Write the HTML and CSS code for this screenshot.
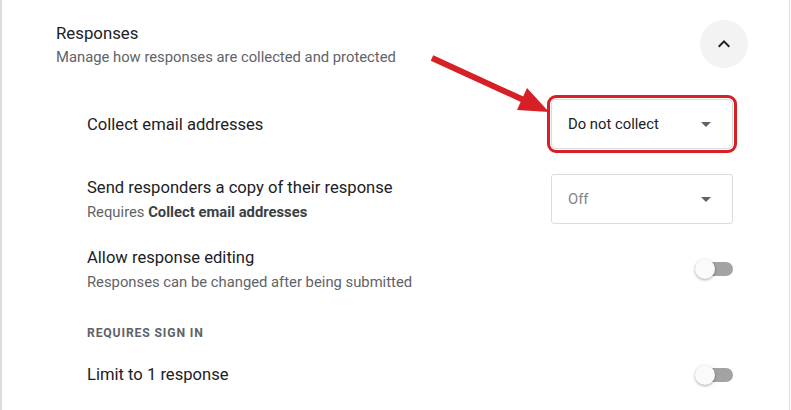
FILE: index.html
```html
<!DOCTYPE html>
<html lang="en">
<head>
    <meta charset="UTF-8">
    <meta name="viewport" content="width=device-width, initial-scale=1.0">
    <title>Form settings - Responses</title>
    <link rel="stylesheet" href="styles.css">
</head>
<body>
    <div class="panel">
        <div class="section-head">
            <div>
                <h2 class="section-title">Responses</h2>
                <p class="section-sub">Manage how responses are collected and protected</p>
            </div>
            <button class="collapse-button" aria-label="Collapse">
                <svg width="24" height="24" viewBox="0 0 24 24"><path d="M12 8l-6 6 1.41 1.41L12 10.83l4.59 4.58L18 14z" fill="#202124"/></svg>
            </button>
        </div>

        <div class="settings">
            <div class="setting">
                <div class="setting-text">
                    <div class="setting-label first-label">Collect email addresses</div>
                </div>
                <div class="select highlight">
                    <span>Do not collect</span>
                    <svg width="24" height="24" viewBox="0 0 24 24"><path d="M7 10l5 5 5-5z" fill="#5f6368"/></svg>
                </div>
            </div>

            <div class="setting second">
                <div class="setting-text">
                    <div class="setting-label">Send responders a copy of their response</div>
                    <div class="setting-sub">Requires <b>Collect email addresses</b></div>
                </div>
                <div class="select disabled">
                    <span>Off</span>
                    <svg width="24" height="24" viewBox="0 0 24 24"><path d="M7 10l5 5 5-5z" fill="#5f6368"/></svg>
                </div>
            </div>

            <div class="setting third">
                <div class="setting-text">
                    <div class="setting-label">Allow response editing</div>
                    <div class="setting-sub">Responses can be changed after being submitted</div>
                </div>
                <div class="switch"><span class="thumb"></span></div>
            </div>

            <div class="group-label">Requires sign in</div>

            <div class="setting last">
                <div class="setting-text">
                    <div class="setting-label">Limit to 1 response</div>
                </div>
                <div class="switch"><span class="thumb"></span></div>
            </div>
        </div>

        <svg class="pointer" width="140" height="70" viewBox="0 0 140 70">
            <line x1="6" y1="8" x2="100" y2="51" stroke="#d71f26" stroke-width="6"/>
            <polygon points="123,62 101,38 91,60" fill="#d71f26"/>
        </svg>
    </div>
</body>
</html>
```

FILE: styles.css
```css
* {
    box-sizing: border-box;
}
body {
    margin: 0;
    background-color: white;
    font-family: Roboto, "Noto Sans", Arial, sans-serif;
    color: #202124;
}
.panel {
    position: relative;
    width: 790px;
    height: 410px;
    border-left: 2px solid #dadce0;
    border-right: 1px solid #dddbe9;
    padding: 20px 41px 0 54px;
}
.section-head {
    display: flex;
    justify-content: space-between;
    align-items: center;
}
.section-title {
    margin: 0;
    font-size: 16.8px;
    font-weight: 400;
    line-height: 24px;
}
.section-sub {
    margin: 2px 0 0 0;
    font-size: 14.8px;
    line-height: 20px;
    color: #5f6368;
}
.collapse-button {
    width: 48px;
    height: 48px;
    border: none;
    border-radius: 50%;
    background-color: #f3f3f3;
    display: flex;
    align-items: center;
    justify-content: center;
    padding: 0;
}
.settings {
    margin-top: 31px;
    padding: 0 15px 0 31px;
    display: flex;
    flex-direction: column;
    gap: 22px;
}
.setting {
    display: flex;
    justify-content: space-between;
    align-items: center;
    min-height: 50px;
}
.setting.second {
    margin-top: 3px;
}
.setting.third {
    margin-top: -2px;
}
.setting-label {
    font-size: 16.6px;
    line-height: 24px;
}
.first-label {
    padding-top: 2px;
}
.setting-sub {
    margin-top: 2px;
    font-size: 14.8px;
    line-height: 20px;
    color: #5f6368;
}
.setting-sub b {
    font-weight: 700;
    color: #3c4043;
}
.select {
    width: 182px;
    height: 50px;
    border: 1px solid #dadce0;
    border-radius: 3px;
    display: flex;
    align-items: center;
    justify-content: space-between;
    padding: 0 14px 0 16px;
    font-size: 14.8px;
}
.select.disabled {
    color: #80868b;
}
.highlight {
    outline: 3px solid #d71f26;
    outline-offset: 1px;
    border-radius: 5px;
}
.group-label {
    margin-top: 9px;
    font-size: 12.2px;
    line-height: 16px;
    font-weight: 700;
    letter-spacing: 0.85px;
    text-transform: uppercase;
    color: #5f6368;
}
.setting.last {
    min-height: 24px;
    margin-top: 0;
}
.switch {
    position: relative;
    width: 38px;
    height: 20px;
}
.switch::before {
    content: "";
    position: absolute;
    left: 4px;
    top: 3px;
    width: 34px;
    height: 14px;
    border-radius: 7px;
    background-color: #a3a3a3;
}
.thumb {
    position: absolute;
    left: 0;
    top: 0;
    width: 20px;
    height: 20px;
    border-radius: 50%;
    background-color: #fafafa;
    box-shadow: 0 1px 3px rgba(0, 0, 0, 0.35);
}
.pointer {
    position: absolute;
    left: 424px;
    top: 50px;
}
```
